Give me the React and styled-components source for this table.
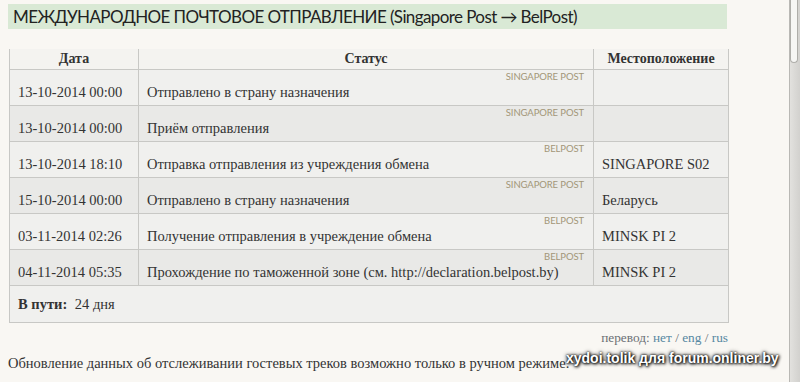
import React from "react";
import styled, { createGlobalStyle } from "styled-components";

const GlobalStyle = createGlobalStyle`
  html, body {
    margin: 0;
    padding: 0;
    background: #f9f7f3;
    overflow: hidden;
  }
  body {
    font-family: "Liberation Serif", "DejaVu Serif", serif;
    color: #333;
  }
`;

const Page = styled.div`
  display: flex;
  width: 800px;
  height: 382px;
  overflow: hidden;
`;

const Main = styled.main`
  flex: 1;
  position: relative;
  padding: 4px 0 0 8px;
`;

const Title = styled.h1`
  margin: 0;
  width: 719px;
  height: 25px;
  box-sizing: border-box;
  padding: 0 0 0 5px;
  background: #d9e9d5;
  font-family: Lato, "Open Sans", sans-serif;
  font-weight: 400;
  font-size: 17px;
  letter-spacing: -0.6px;
  line-height: 26px;
  color: #222;
  white-space: nowrap;
`;

const Table = styled.table`
  margin: 20px 0 0 1px;
  width: 719px;
  border-collapse: collapse;
  table-layout: fixed;
  font-size: 14.5px;
  line-height: 17px;
`;

const Col = styled.col`
  width: ${(p) => p.$w}px;
`;

const Th = styled.th`
  height: 18px;
  padding: 0 8px 2px;
  vertical-align: bottom;
  text-align: center;
  font-weight: 700;
  font-size: 14px;
  color: #333;
  background: #f4f3f0;
  border-left: 1px solid #c8c8c5;
  border-right: 1px solid #c8c8c5;
  border-bottom: 1px solid #c8c8c5;
`;

const Row = styled.tr`
  background: ${(p) => (p.$dark ? "#e9e9e7" : "#f0f0ee")};
`;

const Td = styled.td`
  position: relative;
  height: 31px;
  padding: 0 8px 4px;
  vertical-align: bottom;
  border: 1px solid #c8c8c5;
  white-space: nowrap;
  overflow: visible;
`;

const Source = styled.span`
  position: absolute;
  top: 1px;
  right: 9px;
  font-family: Lato, "Open Sans", sans-serif;
  font-size: 9.5px;
  line-height: 11px;
  letter-spacing: -0.1px;
  color: #a29677;
`;

const FooterCell = styled.td`
  height: 36px;
  padding: 0 8px;
  vertical-align: middle;
  background: #f0f0ee;
  border: 1px solid #c8c8c5;
`;

const Bold = styled.b`
  margin-right: 4px;
`;

const Translate = styled.div`
  width: 719px;
  margin: 7px 0 0 1px;
  text-align: right;
  font-size: 13.3px;
  line-height: 15px;
  color: #6b7075;
`;

const Link = styled.span`
  color: #5788a2;
`;

const Note = styled.p`
  margin: 10px 0 0 0;
  font-size: 14.5px;
  line-height: 17px;
  white-space: nowrap;
  color: #333;
`;

const Watermark = styled.div`
  position: absolute;
  left: 566px;
  top: 350px;
  font-family: "Liberation Sans", Arial, sans-serif;
  font-weight: 700;
  font-size: 14px;
  color: #fff;
  white-space: nowrap;
  text-shadow: 0 0 2px #000, 0 0 4px #000, 1px 1px 3px #000;
`;

const Scrollbar = styled.div`
  width: 11px;
  height: 100%;
  box-sizing: border-box;
  border-left: 1px solid #b9b8b4;
  background: linear-gradient(to right, #e2e1de, #d2d1ce);
  display: flex;
  flex-direction: column;
`;

const Thumb = styled.div`
  height: 63px;
  width: 8px;
  box-sizing: border-box;
  background: #f6f6f4;
  border: 1px solid #aeada9;
  border-top: none;
  border-radius: 0 0 4px 4px;
`;

const events = [
  { date: "13-10-2014 00:00", status: "Отправлено в страну назначения", src: "SINGAPORE POST", loc: "" },
  { date: "13-10-2014 00:00", status: "Приём отправления", src: "SINGAPORE POST", loc: "" },
  { date: "13-10-2014 18:10", status: "Отправка отправления из учреждения обмена", src: "BELPOST", loc: "SINGAPORE S02" },
  { date: "15-10-2014 00:00", status: "Отправлено в страну назначения", src: "SINGAPORE POST", loc: "Беларусь" },
  { date: "03-11-2014 02:26", status: "Получение отправления в учреждение обмена", src: "BELPOST", loc: "MINSK PI 2" },
  { date: "04-11-2014 05:35", status: "Прохождение по таможенной зоне (см. http://declaration.belpost.by)", src: "BELPOST", loc: "MINSK PI 2" },
];

export default function App() {
  return (
    <Page>
      <GlobalStyle />
      <Main>
        <Title>МЕЖДУНАРОДНОЕ ПОЧТОВОЕ ОТПРАВЛЕНИЕ (Singapore Post → BelPost)</Title>
        <Table>
          <colgroup>
            <Col $w={129} />
            <Col $w={455} />
            <Col $w={135} />
          </colgroup>
          <thead>
            <tr>
              <Th>Дата</Th>
              <Th>Статус</Th>
              <Th>Местоположение</Th>
            </tr>
          </thead>
          <tbody>
            {events.map((e, i) => (
              <Row key={i} $dark={i % 2 === 1}>
                <Td>{e.date}</Td>
                <Td>
                  <Source>{e.src}</Source>
                  {e.status}
                </Td>
                <Td>{e.loc}</Td>
              </Row>
            ))}
            <tr>
              <FooterCell colSpan={3}>
                <Bold>В пути:</Bold> 24 дня
              </FooterCell>
            </tr>
          </tbody>
        </Table>
        <Translate>
          перевод: <Link>нет</Link> / <Link>eng</Link> / <Link>rus</Link>
        </Translate>
        <Note>Обновление данных об отслеживании гостевых треков возможно только в ручном режиме.</Note>
        <Watermark>xydoi.tolik для forum.onliner.by</Watermark>
      </Main>
      <Scrollbar>
        <Thumb />
      </Scrollbar>
    </Page>
  );
}
